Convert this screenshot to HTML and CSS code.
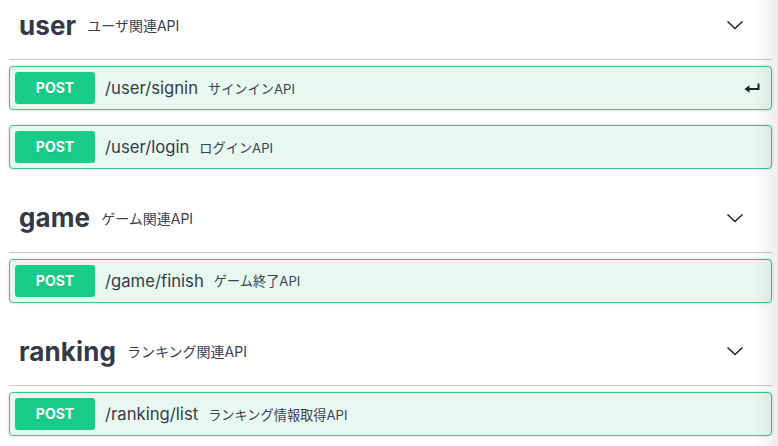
FILE: index.html
```html
<!DOCTYPE html>
<html lang="ja">
<head>
<meta charset="utf-8">
<title>API</title>
<link rel="stylesheet" href="styles.css">
</head>
<body>
<div class="wrap">
  <section class="tag-section">
    <h3 class="tag">
      <span class="tag-name">user</span>
      <small class="tag-desc">ユーザ関連API</small>
      <span class="expand"><svg viewBox="0 0 20 20" width="20" height="20"><path d="M2.5 6.5 L10 13.5 L17.5 6.5" fill="none" stroke="#222" stroke-width="1.5"/></svg></span>
    </h3>
    <div class="opblock">
      <span class="method">POST</span>
      <span class="path">/user/signin</span>
      <span class="desc">サインインAPI</span>
      <svg class="enter" viewBox="0 0 16 10" width="16" height="10"><path d="M14.5 0.5 V6 H3" fill="none" stroke="#222" stroke-width="2"/><path d="M0.5 6 L5.5 2.3 V9.7 Z" fill="#222"/></svg>
    </div>
    <div class="opblock">
      <span class="method">POST</span>
      <span class="path">/user/login</span>
      <span class="desc">ログインAPI</span>
    </div>
  </section>
  <section class="tag-section">
    <h3 class="tag">
      <span class="tag-name">game</span>
      <small class="tag-desc">ゲーム関連API</small>
      <span class="expand"><svg viewBox="0 0 20 20" width="20" height="20"><path d="M2.5 6.5 L10 13.5 L17.5 6.5" fill="none" stroke="#222" stroke-width="1.5"/></svg></span>
    </h3>
    <div class="opblock">
      <span class="method">POST</span>
      <span class="path">/game/finish</span>
      <span class="desc">ゲーム終了API</span>
    </div>
  </section>
  <section class="tag-section">
    <h3 class="tag">
      <span class="tag-name">ranking</span>
      <small class="tag-desc">ランキング関連API</small>
      <span class="expand"><svg viewBox="0 0 20 20" width="20" height="20"><path d="M2.5 6.5 L10 13.5 L17.5 6.5" fill="none" stroke="#222" stroke-width="1.5"/></svg></span>
    </h3>
    <div class="opblock">
      <span class="method">POST</span>
      <span class="path">/ranking/list</span>
      <span class="desc">ランキング情報取得API</span>
    </div>
  </section>
</div>
</body>
</html>
```
FILE: styles.css
```css
html, body {
  margin: 0;
  padding: 0;
  background: #fff;
  overflow: hidden;
}
body {
  font-family: Inter, "Noto Sans CJK JP", sans-serif;
  color: #3b4151;
}
body::after {
  content: "";
  position: fixed;
  top: 0;
  right: 0;
  bottom: 0;
  width: 24px;
  background: linear-gradient(to right, rgba(0,0,0,0), rgba(0,0,0,0.07));
  pointer-events: none;
}
.wrap {
  margin-top: -8.67px;
  padding: 0 6px 0 9px;
}
.tag-section {
  display: flex;
  flex-direction: column;
}
.tag {
  display: flex;
  align-items: center;
  height: 67.67px;
  box-sizing: content-box;
  margin: 0 0 6px;
  padding: 0 27px 0 10px;
  border-bottom: 1px solid rgba(59,65,81,0.3);
  font-weight: 700;
}
.tag-name {
  font-size: 26px;
  font-weight: 700;
  color: #343947;
  letter-spacing: 0.1px;
}
.tag-desc {
  font-size: 14px;
  font-weight: 400;
  padding: 0 10px 0 11px;
  color: #3b4151;
  flex: 1;
}
.expand {
  display: flex;
  width: 20px;
  height: 20px;
}
.opblock {
  display: flex;
  align-items: center;
  margin: 0 0 15px;
  padding: 5px;
  border: 1px solid #2fcc8c;
  border-radius: 4px;
  background: #e7f8f0;
  box-shadow: 0 0 3px rgba(0,0,0,0.19);
}
.method {
  min-width: 80px;
  padding: 6px 0;
  line-height: 20px;
  border-radius: 3px;
  background: #17cc8a;
  color: #fff;
  font-size: 14px;
  font-weight: 700;
  text-align: center;
  text-shadow: 0 1px 0 rgba(0,0,0,0.1);
}
.path {
  padding: 0 10px;
  font-size: 16.7px;
  color: #363b4a;
}
.desc {
  font-size: 13.2px;
  color: #3b4151;
}
.enter {
  margin-left: auto;
  margin-right: 6px;
}
```
